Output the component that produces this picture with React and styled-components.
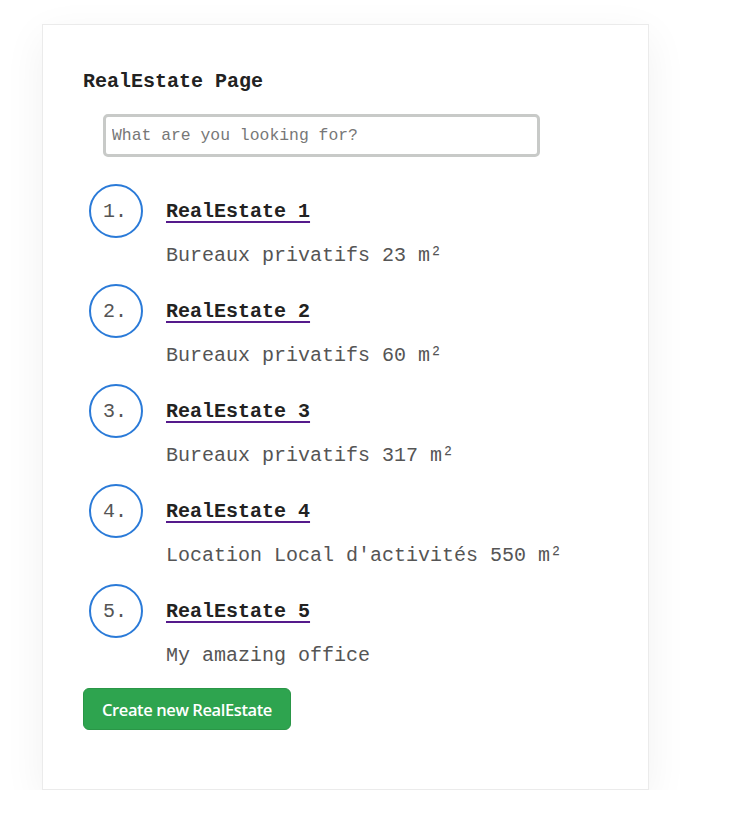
import React from 'react';
import styled, { createGlobalStyle } from 'styled-components';

const estates = [
    { id: 1, name: 'RealEstate 1', description: 'Bureaux privatifs 23 m²' },
    { id: 2, name: 'RealEstate 2', description: 'Bureaux privatifs 60 m²' },
    { id: 3, name: 'RealEstate 3', description: 'Bureaux privatifs 317 m²' },
    { id: 4, name: 'RealEstate 4', description: "Location Local d'activités 550 m²" },
    { id: 5, name: 'RealEstate 5', description: 'My amazing office' },
];

const App = () => {
    return (
    <>
        <GlobalStyle />
        <Card>
            <Title>RealEstate Page</Title>
            <SearchInput placeholder="What are you looking for?" />
            <List>
                {estates.map((estate) => (
                    <Item key={estate.id}>
                        <Badge>{estate.id}.</Badge>
                        <NameLink href="#">{estate.name}</NameLink>
                        <Description>{estate.description}</Description>
                    </Item>
                ))}
            </List>
            <CreateButton>Create new RealEstate</CreateButton>
        </Card>
    </>
    );
}

const GlobalStyle = createGlobalStyle`
body {
    margin: 0;
    background: #fff;
    font-family: "Liberation Mono", "DejaVu Sans Mono", monospace;
}
`

const Card = styled.div`
width: 607px;
box-sizing: border-box;
margin: 24px 0 0 42px;
padding: 45px 40px 59px;
background: #fff;
border: 1px solid #ebebeb;
box-shadow: 0 12px 40px rgba(0, 0, 0, 0.06);
`

const Title = styled.h1`
margin: 0;
font-size: 20px;
line-height: 24px;
font-weight: 700;
color: #222;
`

const SearchInput = styled.input`
display: block;
box-sizing: border-box;
width: 437px;
height: 43px;
margin: 20px 0 0 20px;
padding: 0 6px;
border: 3px solid #c8cac8;
border-radius: 5px;
font-family: "Liberation Mono", "DejaVu Sans Mono", monospace;
font-size: 16.4px;
color: #333;
outline: none;
&::placeholder {
    color: #777;
}
`

const List = styled.ol`
list-style: none;
margin: 27px 0 0;
padding: 0;
`

const Item = styled.li`
display: grid;
grid-template-columns: 54px 1fr;
column-gap: 23px;
align-items: center;
margin: 0 0 14px 6px;
`

const Badge = styled.span`
box-sizing: border-box;
width: 54px;
height: 54px;
border: 2px solid #2a7ad8;
border-radius: 50%;
display: flex;
align-items: center;
justify-content: center;
padding-right: 2px;
font-size: 20px;
color: #555;
`

const NameLink = styled.a`
font-size: 20px;
font-weight: 700;
color: #222;
text-decoration: underline;
text-decoration-color: #551a8b;
text-decoration-thickness: 2px;
text-underline-offset: 4px;
justify-self: start;
`

const Description = styled.p`
grid-column: 2;
margin: 4px 0 0;
font-size: 20px;
line-height: 28px;
color: #555;
`

const CreateButton = styled.button`
display: block;
margin-top: 18px;
width: 208px;
height: 42px;
border: 1px solid #2a9647;
border-radius: 6px;
background: #2ea44f;
color: #fff;
font-family: "Open Sans", "Noto Sans", sans-serif;
font-size: 16.5px;
font-weight: 600;
letter-spacing: -0.4px;
cursor: pointer;
`

export default App;
